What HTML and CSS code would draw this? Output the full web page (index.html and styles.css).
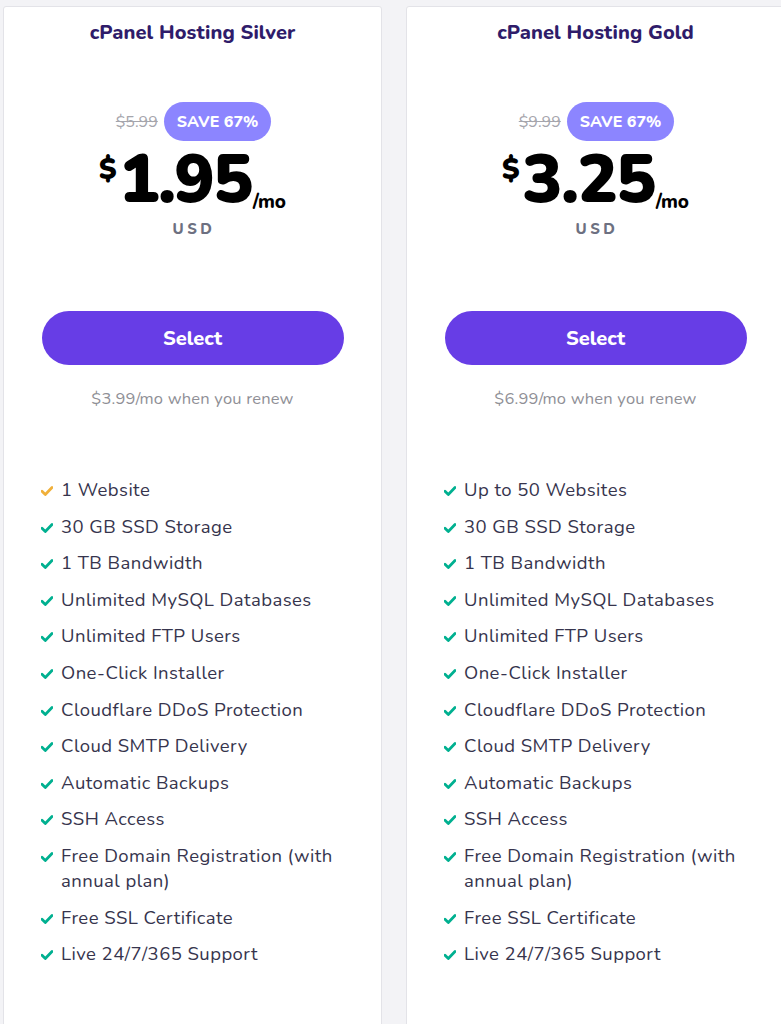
FILE: index.html
```html
<!DOCTYPE html>
<html lang="en">
<head>
<meta charset="utf-8">
<title>cPanel Hosting Plans</title>
<link rel="stylesheet" href="styles.css">
</head>
<body>
<div class="plans">
  <section class="card">
    <h2 class="title">cPanel Hosting Silver</h2>
    <div class="discount">
      <span class="old">$5.99</span>
      <span class="badge">SAVE 67%</span>
    </div>
    <div class="price">
      <span class="cur">$</span><span class="amount">1.95</span><span class="per">/mo</span>
    </div>
    <div class="usd">USD</div>
    <button class="select">Select</button>
    <p class="renew">$3.99/mo when you renew</p>
    <ul class="features">
      <li><svg class="check gold" viewBox="0 0 12 10"><path d="M1 5.2 4.3 8.4 11 1.6" /></svg><span>1 Website</span></li>
      <li><svg class="check" viewBox="0 0 12 10"><path d="M1 5.2 4.3 8.4 11 1.6" /></svg><span>30 GB SSD Storage</span></li>
      <li><svg class="check" viewBox="0 0 12 10"><path d="M1 5.2 4.3 8.4 11 1.6" /></svg><span>1 TB Bandwidth</span></li>
      <li><svg class="check" viewBox="0 0 12 10"><path d="M1 5.2 4.3 8.4 11 1.6" /></svg><span>Unlimited MySQL Databases</span></li>
      <li><svg class="check" viewBox="0 0 12 10"><path d="M1 5.2 4.3 8.4 11 1.6" /></svg><span>Unlimited FTP Users</span></li>
      <li><svg class="check" viewBox="0 0 12 10"><path d="M1 5.2 4.3 8.4 11 1.6" /></svg><span>One-Click Installer</span></li>
      <li><svg class="check" viewBox="0 0 12 10"><path d="M1 5.2 4.3 8.4 11 1.6" /></svg><span>Cloudflare DDoS Protection</span></li>
      <li><svg class="check" viewBox="0 0 12 10"><path d="M1 5.2 4.3 8.4 11 1.6" /></svg><span>Cloud SMTP Delivery</span></li>
      <li><svg class="check" viewBox="0 0 12 10"><path d="M1 5.2 4.3 8.4 11 1.6" /></svg><span>Automatic Backups</span></li>
      <li><svg class="check" viewBox="0 0 12 10"><path d="M1 5.2 4.3 8.4 11 1.6" /></svg><span>SSH Access</span></li>
      <li><svg class="check" viewBox="0 0 12 10"><path d="M1 5.2 4.3 8.4 11 1.6" /></svg><span>Free Domain Registration (with annual plan)</span></li>
      <li><svg class="check" viewBox="0 0 12 10"><path d="M1 5.2 4.3 8.4 11 1.6" /></svg><span>Free SSL Certificate</span></li>
      <li><svg class="check" viewBox="0 0 12 10"><path d="M1 5.2 4.3 8.4 11 1.6" /></svg><span>Live 24/7/365 Support</span></li>
    </ul>
  </section>
  <section class="card">
    <h2 class="title">cPanel Hosting Gold</h2>
    <div class="discount">
      <span class="old">$9.99</span>
      <span class="badge">SAVE 67%</span>
    </div>
    <div class="price">
      <span class="cur">$</span><span class="amount">3.25</span><span class="per">/mo</span>
    </div>
    <div class="usd">USD</div>
    <button class="select">Select</button>
    <p class="renew">$6.99/mo when you renew</p>
    <ul class="features">
      <li><svg class="check" viewBox="0 0 12 10"><path d="M1 5.2 4.3 8.4 11 1.6" /></svg><span>Up to 50 Websites</span></li>
      <li><svg class="check" viewBox="0 0 12 10"><path d="M1 5.2 4.3 8.4 11 1.6" /></svg><span>30 GB SSD Storage</span></li>
      <li><svg class="check" viewBox="0 0 12 10"><path d="M1 5.2 4.3 8.4 11 1.6" /></svg><span>1 TB Bandwidth</span></li>
      <li><svg class="check" viewBox="0 0 12 10"><path d="M1 5.2 4.3 8.4 11 1.6" /></svg><span>Unlimited MySQL Databases</span></li>
      <li><svg class="check" viewBox="0 0 12 10"><path d="M1 5.2 4.3 8.4 11 1.6" /></svg><span>Unlimited FTP Users</span></li>
      <li><svg class="check" viewBox="0 0 12 10"><path d="M1 5.2 4.3 8.4 11 1.6" /></svg><span>One-Click Installer</span></li>
      <li><svg class="check" viewBox="0 0 12 10"><path d="M1 5.2 4.3 8.4 11 1.6" /></svg><span>Cloudflare DDoS Protection</span></li>
      <li><svg class="check" viewBox="0 0 12 10"><path d="M1 5.2 4.3 8.4 11 1.6" /></svg><span>Cloud SMTP Delivery</span></li>
      <li><svg class="check" viewBox="0 0 12 10"><path d="M1 5.2 4.3 8.4 11 1.6" /></svg><span>Automatic Backups</span></li>
      <li><svg class="check" viewBox="0 0 12 10"><path d="M1 5.2 4.3 8.4 11 1.6" /></svg><span>SSH Access</span></li>
      <li><svg class="check" viewBox="0 0 12 10"><path d="M1 5.2 4.3 8.4 11 1.6" /></svg><span>Free Domain Registration (with annual plan)</span></li>
      <li><svg class="check" viewBox="0 0 12 10"><path d="M1 5.2 4.3 8.4 11 1.6" /></svg><span>Free SSL Certificate</span></li>
      <li><svg class="check" viewBox="0 0 12 10"><path d="M1 5.2 4.3 8.4 11 1.6" /></svg><span>Live 24/7/365 Support</span></li>
    </ul>
  </section>
</div>
</body>
</html>
```
FILE: styles.css
```css
* { box-sizing: border-box; }
html, body { margin: 0; height: 100%; overflow: hidden; }
body {
  background: #f3f3f6;
  font-family: "Nunito", "Lato", "Open Sans", sans-serif;
}
.plans {
  display: flex;
  gap: 24px;
  padding: 6px 0 0 3px;
  width: 820px;
}
.card {
  flex: 0 0 379px;
  height: 1100px;
  background: #fff;
  border: 1px solid #e3e3e8;
  border-radius: 3px 3px 0 0;
  display: flex;
  flex-direction: column;
  align-items: center;
}
.title {
  margin: 12px 0 0;
  font-size: 20px;
  font-weight: 800;
  color: #2f1c6a;
  letter-spacing: 0.1px;
}
.discount {
  margin-top: 56px;
  display: flex;
  align-items: center;
  gap: 6px;
  padding-left: 2px;
}
.old {
  color: #a5a5ac;
  font-size: 16px;
  text-decoration: line-through;
}
.badge {
  background: #8c85ff;
  color: #fff;
  font-weight: 800;
  font-size: 16px;
  height: 39px;
  padding: 0 13px;
  border-radius: 20px;
  display: flex;
  align-items: center;
}
.price {
  display: flex;
  align-items: flex-start;
  margin-top: 4px;
  height: 70px;
  color: #000;
  font-weight: 900;
}
.cur { font-size: 29px; line-height: 32px; margin-top: 9px; margin-right: 3px; }
.amount { font-size: 67px; line-height: 70px; letter-spacing: -1.6px; }
.per { font-size: 19px; font-weight: 800; align-self: flex-end; margin-left: 1px; }
.usd {
  margin-top: 4px;
  color: #6d7081;
  font-weight: 800;
  font-size: 15px;
  letter-spacing: 3.5px;
  padding-left: 3px;
}
.select {
  margin-top: 72px;
  width: 302px;
  height: 54px;
  border: none;
  border-radius: 27px;
  background: #673de6;
  color: #fff;
  font-family: inherit;
  font-weight: 800;
  font-size: 20px;
}
.renew {
  margin: 22px 0 0;
  color: #8f8f96;
  font-size: 16.5px;
  letter-spacing: 0.2px;
}
.features {
  list-style: none;
  margin: 68px 0 0;
  padding: 0 0 0 37px;
  align-self: stretch;
  display: flex;
  flex-direction: column;
  gap: 11.6px;
}
.features li {
  display: flex;
  align-items: flex-start;
  gap: 8px;
  font-size: 18.5px;
  letter-spacing: 0.45px;
  line-height: 25px;
  color: #36344d;
  padding-right: 30px;
}
.check {
  flex: 0 0 12px;
  width: 12px;
  height: 10px;
  margin-top: 8px;
  fill: none;
  stroke: #00b090;
  stroke-width: 2.8;
  stroke-linecap: round;
  stroke-linejoin: round;
}
.check.gold { stroke: #f0b03a; }
```
